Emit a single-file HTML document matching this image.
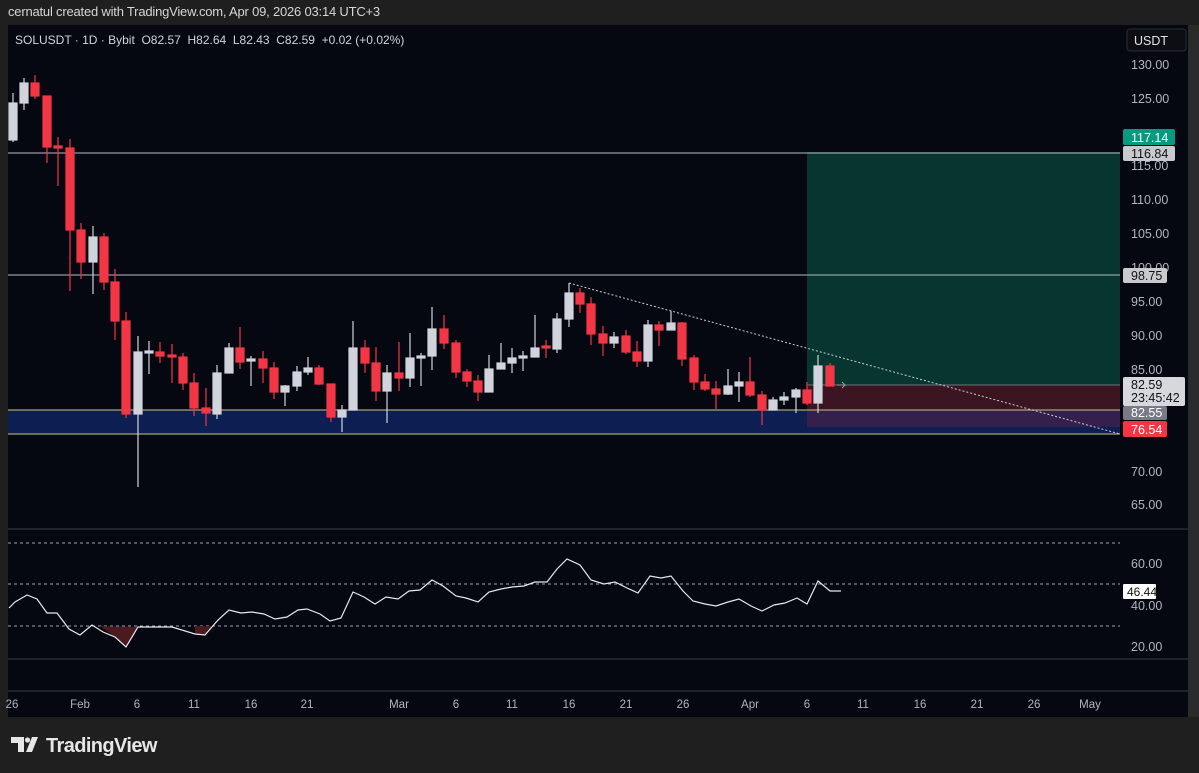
<!DOCTYPE html>
<html><head><meta charset="utf-8"><style>
html,body{margin:0;padding:0;background:#1f1f1f;width:1199px;height:773px;overflow:hidden;font-family:"Liberation Sans",sans-serif}
.hdr{position:absolute;left:8px;top:4px;color:#d6d6d6;font-size:13px;letter-spacing:-0.2px}
svg{position:absolute;left:0;top:0}
</style></head><body>
<div class="hdr">cernatul created with TradingView.com, Apr 09, 2026 03:14 UTC+3</div>
<svg width="1199" height="773" viewBox="0 0 1199 773" font-family="Liberation Sans, sans-serif">
<rect x="8" y="25" width="1180" height="692" fill="#050810"/>
<rect x="8" y="410" width="1112" height="24" fill="#0d1f52"/>
<rect x="807" y="152" width="313" height="233" fill="#073530"/>
<rect x="807" y="385" width="313" height="25" fill="#3a1420"/>
<rect x="807" y="410" width="313" height="17" fill="#35204d"/>
<line x1="8" y1="153" x2="1120" y2="153" stroke="#b8bcc4" stroke-width="1"/>
<line x1="8" y1="275" x2="1120" y2="275" stroke="#b8bcc4" stroke-width="1"/>
<line x1="8" y1="410" x2="1120" y2="410" stroke="#a9a56a" stroke-width="1.2"/>
<line x1="8" y1="434" x2="1120" y2="434" stroke="#a9a56a" stroke-width="1.2"/>
<line x1="807" y1="385" x2="1120" y2="385" stroke="#8a8d96" stroke-width="0.8"/>
<line x1="569" y1="283" x2="1120" y2="434" stroke="#c8ccd4" stroke-width="1" stroke-dasharray="2 2"/>
<g stroke-width="1.2">
<g fill="#d1d4dc" stroke="#d1d4dc">
<line x1="13" y1="93" x2="13" y2="142"/><rect x="9" y="103" width="8" height="37"/>
<line x1="24" y1="78" x2="24" y2="110"/><rect x="20" y="83" width="8" height="20"/>
<line x1="93" y1="226" x2="93" y2="294"/><rect x="89" y="237" width="8" height="25"/>
<line x1="138" y1="336" x2="138" y2="487"/><rect x="134" y="352" width="8" height="62"/>
<line x1="149" y1="341" x2="149" y2="374"/><rect x="145" y="351" width="8" height="2"/>
<line x1="217" y1="365" x2="217" y2="419"/><rect x="213" y="373" width="8" height="41"/>
<line x1="229" y1="343" x2="229" y2="373"/><rect x="225" y="348" width="8" height="25"/>
<line x1="251" y1="356" x2="251" y2="386"/><rect x="247" y="359" width="8" height="2"/>
<line x1="285" y1="385" x2="285" y2="406"/><rect x="281" y="386" width="8" height="6"/>
<line x1="297" y1="366" x2="297" y2="391"/><rect x="293" y="372" width="8" height="14"/>
<line x1="308" y1="357" x2="308" y2="375"/><rect x="304" y="368" width="8" height="4"/>
<line x1="342" y1="405" x2="342" y2="432"/><rect x="338" y="410" width="8" height="7"/>
<line x1="353" y1="321" x2="353" y2="410"/><rect x="349" y="348" width="8" height="62"/>
<line x1="387" y1="365" x2="387" y2="423"/><rect x="383" y="373" width="8" height="18"/>
<line x1="410" y1="333" x2="410" y2="387"/><rect x="406" y="358" width="8" height="20"/>
<line x1="421" y1="353" x2="421" y2="386"/><rect x="417" y="356" width="8" height="2"/>
<line x1="432" y1="307" x2="432" y2="370"/><rect x="428" y="329" width="8" height="27"/>
<line x1="489" y1="355" x2="489" y2="392"/><rect x="485" y="369" width="8" height="23"/>
<line x1="501" y1="343" x2="501" y2="369"/><rect x="497" y="363" width="8" height="6"/>
<line x1="512" y1="348" x2="512" y2="373"/><rect x="508" y="358" width="8" height="5"/>
<line x1="523" y1="351" x2="523" y2="371"/><rect x="519" y="356" width="8" height="2"/>
<line x1="535" y1="315" x2="535" y2="357"/><rect x="531" y="348" width="8" height="9"/>
<line x1="557" y1="313" x2="557" y2="353"/><rect x="553" y="319" width="8" height="30"/>
<line x1="569" y1="283" x2="569" y2="327"/><rect x="565" y="293" width="8" height="26"/>
<line x1="614" y1="332" x2="614" y2="348"/><rect x="610" y="337" width="8" height="6"/>
<line x1="648" y1="320" x2="648" y2="367"/><rect x="644" y="325" width="8" height="36"/>
<line x1="671" y1="311" x2="671" y2="330"/><rect x="667" y="323" width="8" height="7"/>
<line x1="728" y1="369" x2="728" y2="395"/><rect x="724" y="386" width="8" height="8"/>
<line x1="739" y1="372" x2="739" y2="402"/><rect x="735" y="382" width="8" height="4"/>
<line x1="773" y1="397" x2="773" y2="410"/><rect x="769" y="400" width="8" height="10"/>
<line x1="784" y1="392" x2="784" y2="405"/><rect x="780" y="397" width="8" height="3"/>
<line x1="796" y1="388" x2="796" y2="413"/><rect x="792" y="390" width="8" height="7"/>
<line x1="818" y1="355" x2="818" y2="413"/><rect x="814" y="366" width="8" height="37"/>
</g>
<g fill="#f23645" stroke="#f23645">
<line x1="35" y1="75" x2="35" y2="99"/><rect x="31" y="83" width="8" height="13"/>
<line x1="47" y1="96" x2="47" y2="163"/><rect x="43" y="96" width="8" height="51"/>
<line x1="58" y1="137" x2="58" y2="186"/><rect x="54" y="146" width="8" height="2"/>
<line x1="70" y1="139" x2="70" y2="291"/><rect x="66" y="148" width="8" height="82"/>
<line x1="81" y1="223" x2="81" y2="279"/><rect x="77" y="230" width="8" height="32"/>
<line x1="104" y1="233" x2="104" y2="290"/><rect x="100" y="237" width="8" height="45"/>
<line x1="115" y1="269" x2="115" y2="340"/><rect x="111" y="282" width="8" height="39"/>
<line x1="126" y1="312" x2="126" y2="418"/><rect x="122" y="321" width="8" height="93"/>
<line x1="160" y1="342" x2="160" y2="363"/><rect x="156" y="352" width="8" height="4"/>
<line x1="172" y1="344" x2="172" y2="383"/><rect x="168" y="355" width="8" height="2"/>
<line x1="183" y1="353" x2="183" y2="390"/><rect x="179" y="357" width="8" height="26"/>
<line x1="194" y1="373" x2="194" y2="416"/><rect x="190" y="383" width="8" height="25"/>
<line x1="206" y1="388" x2="206" y2="426"/><rect x="202" y="408" width="8" height="5"/>
<line x1="240" y1="327" x2="240" y2="369"/><rect x="236" y="348" width="8" height="14"/>
<line x1="263" y1="351" x2="263" y2="383"/><rect x="259" y="359" width="8" height="9"/>
<line x1="274" y1="362" x2="274" y2="399"/><rect x="270" y="368" width="8" height="24"/>
<line x1="319" y1="365" x2="319" y2="385"/><rect x="315" y="368" width="8" height="16"/>
<line x1="331" y1="384" x2="331" y2="422"/><rect x="327" y="384" width="8" height="33"/>
<line x1="365" y1="340" x2="365" y2="373"/><rect x="361" y="348" width="8" height="15"/>
<line x1="376" y1="347" x2="376" y2="401"/><rect x="372" y="363" width="8" height="28"/>
<line x1="399" y1="342" x2="399" y2="391"/><rect x="395" y="373" width="8" height="5"/>
<line x1="444" y1="315" x2="444" y2="349"/><rect x="440" y="329" width="8" height="14"/>
<line x1="456" y1="340" x2="456" y2="378"/><rect x="452" y="343" width="8" height="29"/>
<line x1="467" y1="369" x2="467" y2="387"/><rect x="463" y="372" width="8" height="9"/>
<line x1="478" y1="375" x2="478" y2="401"/><rect x="474" y="381" width="8" height="11"/>
<line x1="546" y1="340" x2="546" y2="358"/><rect x="542" y="346" width="8" height="2"/>
<line x1="580" y1="288" x2="580" y2="313"/><rect x="576" y="293" width="8" height="11"/>
<line x1="591" y1="297" x2="591" y2="345"/><rect x="587" y="304" width="8" height="30"/>
<line x1="603" y1="326" x2="603" y2="356"/><rect x="599" y="334" width="8" height="9"/>
<line x1="626" y1="330" x2="626" y2="354"/><rect x="622" y="336" width="8" height="16"/>
<line x1="637" y1="341" x2="637" y2="367"/><rect x="633" y="352" width="8" height="9"/>
<line x1="659" y1="321" x2="659" y2="346"/><rect x="655" y="325" width="8" height="5"/>
<line x1="682" y1="322" x2="682" y2="366"/><rect x="678" y="323" width="8" height="36"/>
<line x1="694" y1="355" x2="694" y2="390"/><rect x="690" y="358" width="8" height="24"/>
<line x1="705" y1="374" x2="705" y2="391"/><rect x="701" y="382" width="8" height="7"/>
<line x1="716" y1="381" x2="716" y2="409"/><rect x="712" y="389" width="8" height="5"/>
<line x1="750" y1="357" x2="750" y2="397"/><rect x="746" y="382" width="8" height="13"/>
<line x1="762" y1="391" x2="762" y2="425"/><rect x="758" y="395" width="8" height="15"/>
<line x1="807" y1="382" x2="807" y2="405"/><rect x="803" y="390" width="8" height="13"/>
<line x1="830" y1="363" x2="830" y2="386"/><rect x="826" y="366" width="8" height="20"/>
</g>
</g>
<path d="M837 385h9M842 382l3 3-3 3" stroke="#9598a1" stroke-width="1" fill="none"/>
<g fill="#b2b5be" font-size="12.5">
<text x="1131" y="69">130.00</text><text x="1131" y="103">125.00</text>
<text x="1131" y="170">115.00</text><text x="1131" y="204">110.00</text><text x="1131" y="238">105.00</text>
<text x="1131" y="272">100.00</text><text x="1131" y="306">95.00</text><text x="1131" y="340">90.00</text>
<text x="1131" y="374">85.00</text><text x="1131" y="476">70.00</text><text x="1131" y="509">65.00</text>
</g>
<rect x="1127" y="29" width="59" height="22" rx="3" fill="#0c0e14" stroke="#2a2d35"/>
<text x="1134" y="45" fill="#e0e3eb" font-size="12.5">USDT</text>
<rect x="1123" y="129" width="52" height="16" rx="2" fill="#089981"/><text x="1131" y="142" fill="#fff" font-size="12.5">117.14</text>
<rect x="1123" y="146" width="52" height="15" rx="2" fill="#c9cacd"/><text x="1131" y="158" fill="#111" font-size="12.5">116.84</text>
<rect x="1123" y="268" width="44" height="15" rx="2" fill="#c9cacd"/><text x="1131" y="280" fill="#111" font-size="12.5">98.75</text>
<rect x="1123" y="377" width="62" height="29" rx="2" fill="#d6d8de"/><text x="1131" y="389" fill="#111" font-size="12.5">82.59</text><text x="1131" y="402" fill="#111" font-size="12.5">23:45:42</text>
<rect x="1123" y="406" width="44" height="14" rx="2" fill="#787b86"/><text x="1131" y="417" fill="#fff" font-size="12.5">82.55</text>
<rect x="1123" y="421" width="44" height="16" rx="2" fill="#f23645"/><text x="1131" y="434" fill="#fff" font-size="12.5">76.54</text>
<text x="15" y="44" fill="#d1d4dc" font-size="12" xml:space="preserve" style="white-space:pre">SOLUSDT · 1D · Bybit  O82.57  H82.64  L82.43  C82.59  +0.02 (+0.02%)</text>
<line x1="8" y1="529" x2="1188" y2="529" stroke="#3a3d45"/>
<line x1="8" y1="659" x2="1188" y2="659" stroke="#3a3d45"/>
<line x1="8" y1="691" x2="1188" y2="691" stroke="#3a3d45"/>
<g stroke="#a0a3ab" stroke-dasharray="3 3" stroke-width="1">
<line x1="8" y1="543" x2="1120" y2="543"/><line x1="8" y1="584" x2="1120" y2="584"/><line x1="8" y1="626" x2="1120" y2="626"/>
</g>
<path d="M100 626L115 637L126 647L138 627Z M195 626L195 634L205 635L212 626Z" fill="#4a1a1e"/>
<polyline fill="none" stroke="#e6e8ee" stroke-width="1.2" points="9,608 15,602 27,595 37,599 47,613 57,613 69,629 80,635 92,625 103,632 115,637 126,647 138,627 153,627 172,627 195,634 205,635 218,620 229,610 241,613 252,612 264,614 275,619 287,617 298,610 307,609 320,614 330,621 341,618 353,592 364,597 375,604 386,597 398,599 409,591 420,590 432,580 443,586 456,596 466,598 478,602 489,592 501,589 512,587 524,586 535,582 547,582 557,569 567,559 580,565 591,580 604,584 615,582 627,588 638,593 650,576 661,578 671,576 683,591 693,601 705,604 716,606 728,602 739,599 751,606 762,611 774,605 785,603 797,598 807,604 818,581 830,591 841,591"/>
<g fill="#b2b5be" font-size="12.5">
<text x="1131" y="568">60.00</text><text x="1131" y="610">40.00</text><text x="1131" y="651">20.00</text>
</g>
<rect x="1123" y="584" width="33" height="15" rx="1" fill="#fff"/><text x="1127" y="596" fill="#111" font-size="12">46.44</text>
<g fill="#b2b5be" font-size="11.5" text-anchor="middle">
<text x="12" y="708">26</text><text x="80" y="708">Feb</text><text x="137" y="708">6</text><text x="194" y="708">11</text>
<text x="251" y="708">16</text><text x="307" y="708">21</text><text x="399" y="708">Mar</text><text x="456" y="708">6</text>
<text x="512" y="708">11</text><text x="569" y="708">16</text><text x="626" y="708">21</text><text x="683" y="708">26</text>
<text x="750" y="708">Apr</text><text x="807" y="708">6</text><text x="863" y="708">11</text><text x="920" y="708">16</text>
<text x="977" y="708">21</text><text x="1034" y="708">26</text><text x="1090" y="708">May</text>
</g>
<rect x="1188" y="25" width="11" height="692" fill="#2a2a2a"/>
<g fill="#e6e6e6">
<path d="M11 737h13v15h-6v-9h-7z"/>
<circle cx="27.5" cy="740" r="2.6"/>
<path d="M32 737h6l-6 15h-6z"/>
</g>
<text x="46" y="752" fill="#e6e6e6" font-size="20" font-weight="bold" letter-spacing="-0.6">TradingView</text>
</svg>
</body></html>
